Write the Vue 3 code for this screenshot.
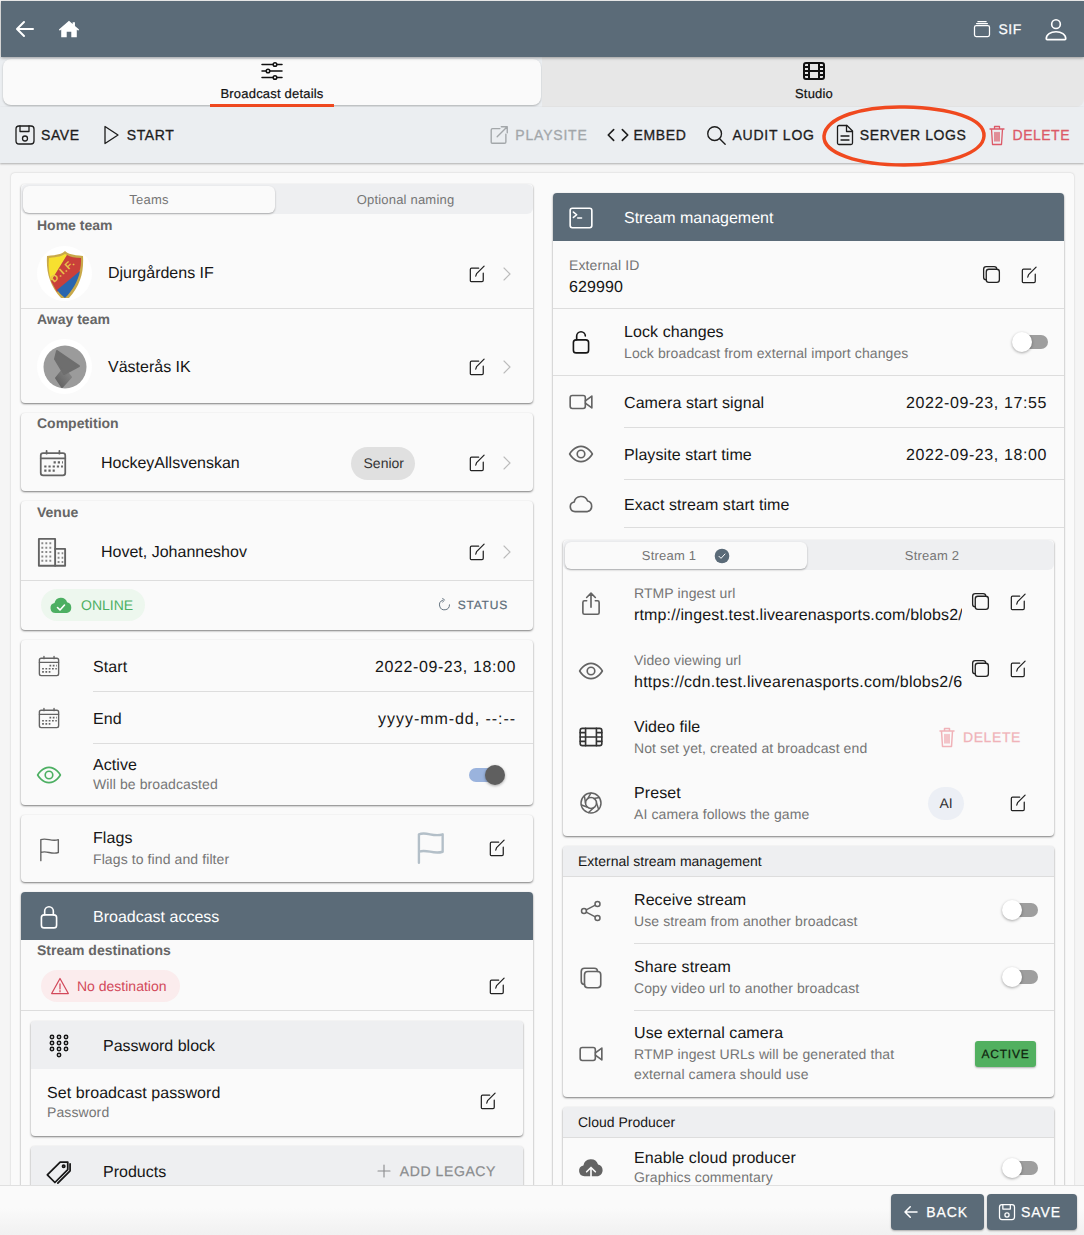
<template>
	<div class="page">
		<header class="topbar">
			<Icon name="back" :size="24" :weight="2" class="back" />
			<Icon name="home" :size="22" class="home" />
			<span class="spacer"></span>
			<Icon name="stack" :size="20" />
			<span class="org">SIF</span>
			<Icon name="user" :size="26" class="user" />
		</header>

		<nav class="tabs">
			<div class="tab on">
				<Icon name="sliders" :size="24" />
				<span class="tab-label">Broadcast details</span>
			</div>
			<div class="tab studio">
				<Icon name="film" :size="24" :weight="2" />
				<span class="tab-label">Studio</span>
			</div>
		</nav>

		<div class="toolbar">
			<button class="tool save"><Icon name="save" :size="24" :weight="1.3" />SAVE</button>
			<button class="tool start"><Icon name="play" :size="24" :weight="1.3" />START</button>
			<span class="spacer"></span>
			<button class="tool muted"><Icon name="external" :size="22" />PLAYSITE</button>
			<button class="tool embed"><Icon name="code" :size="26" />EMBED</button>
			<button class="tool audit"><Icon name="search" :size="22" />AUDIT LOG</button>
			<button class="tool logs"><Icon name="doc" :size="24" :weight="1.3" />SERVER LOGS</button>
			<button class="tool danger"><Icon name="trash" :size="24" :weight="1.3" />DELETE</button>
			<svg class="circle" width="166" height="64" viewBox="0 0 166 64" fill="none" stroke="#f0491f" stroke-width="3.5">
				<path d="M84 3C42 2 5 13 3 32c-1 17 34 29 80 29 44 0 79-12 80-29C164 14 128 4 84 3z" />
			</svg>
		</div>

		<main class="content">
			<div class="panel">
				<section class="col">
					<div class="card">
						<div class="seg">
							<div class="seg-item on">Teams</div>
							<div class="seg-item grow second">Optional naming</div>
						</div>
						<div class="label home-label">Home team</div>
						<div class="pick team home-row">
							<div class="avatar">
								<svg width="42" height="48" viewBox="0 0 42 48">
									<path d="M3 6C13 5 18 4 21 1c3 3 8 4 18 5 1 17-3 32-18 46C6 38 2 23 3 6z" fill="#c9a94a" />
									<path d="M5 8c9-1 13-2 16-4l2 1L7 31C5 24 4 16 5 8z" fill="#f7e02f" />
									<path d="M23 5c3 2 8 3 14 3 0 5 0 9-2 15L13 42 7 31z" fill="#c9403a" />
									<path d="M36 21c-2 10-7 19-15 27-4-3-6-6-8-8z" fill="#2b66ae" />
									<text class="shield-text" x="10" y="33" transform="rotate(-42 10 33)">D.I.F.</text>
								</svg>
							</div>
							<span class="pick-name">Djurgårdens IF</span>
							<Icon name="edit" :size="20" class="edit" />
							<Icon name="chevron" :size="18" class="chev" />
						</div>
						<div class="label away-label">Away team</div>
						<div class="pick team last">
							<div class="avatar">
								<svg width="44" height="44" viewBox="0 0 44 44" stroke-width="2" stroke-linejoin="round">
									<defs>
										<linearGradient id="awayFade" x1="0" y1="1" x2="1" y2="0">
											<stop offset="0" stop-color="#5c5c5c" />
											<stop offset="1" stop-color="#8c8c8c" />
										</linearGradient>
									</defs>
									<circle cx="22" cy="22" r="21.500" fill="#9b9b9b" />
									<path d="M21 23l7 9-9 10-6-9z" fill="url(#awayFade)" stroke="url(#awayFade)" />
									<path d="M14 6l22 15-15 8-9-15z" fill="#6e6e6e" stroke="#6e6e6e" />
								</svg>
							</div>
							<span class="pick-name">Västerås IK</span>
							<Icon name="edit" :size="20" class="edit" />
							<Icon name="chevron" :size="18" class="chev" />
						</div>
					</div>

					<div class="card">
						<div class="label comp-label">Competition</div>
						<div class="pick comp">
							<Icon name="calendar" :size="28" class="grey lead comp-ic" />
							<span class="pick-name">HockeyAllsvenskan</span>
							<span class="chip-senior">Senior</span>
							<Icon name="edit" :size="20" class="edit" />
							<Icon name="chevron" :size="18" class="chev" />
						</div>
					</div>

					<div class="card">
						<div class="label venue-label">Venue</div>
						<div class="pick venue">
							<Icon name="building" :size="30" class="grey lead" />
							<span class="pick-name">Hovet, Johanneshov</span>
							<Icon name="edit" :size="20" class="edit" />
							<Icon name="chevron" :size="18" class="chev" />
						</div>
						<div class="status-row">
							<span class="pill online"><Icon name="cloudCheck" :size="24" />ONLINE</span>
							<span class="spacer"></span>
							<span class="status"><Icon name="refresh" :size="15" />STATUS</span>
						</div>
					</div>

					<div class="card">
						<div class="row shift">
							<div class="lead-cell"><Icon name="calendar" :size="22" class="grey" /></div>
							<div class="body h49 line"><span class="title">Start</span><span class="spacer"></span><span class="date left-date">2022-09-23, 18:00</span></div>
						</div>
						<div class="row shift">
							<div class="lead-cell"><Icon name="calendar" :size="22" class="grey" /></div>
							<div class="body h49 line"><span class="title">End</span><span class="spacer"></span><span class="date left-date blank">yyyy-mm-dd, --:--</span></div>
						</div>
						<div class="row">
							<div class="lead-cell"><Icon name="eye" :size="26" class="green" /></div>
							<div class="body h61">
								<div class="text tight"><div class="title">Active</div><div class="sub">Will be broadcasted</div></div>
								<span class="spacer"></span>
								<span class="toggle on active-toggle"><i></i></span>
							</div>
						</div>
					</div>

					<div class="card">
						<div class="row">
							<div class="lead-cell"><Icon name="flag" :size="28" :weight="1.2" class="grey" /></div>
							<div class="body h67">
								<div class="text"><div class="title">Flags</div><div class="sub">Flags to find and filter</div></div>
								<span class="spacer"></span>
								<Icon name="flag" :size="38" class="flag-ghost" />
								<Icon name="edit" :size="20" class="edit flags-edit raise" />
							</div>
						</div>
					</div>

					<div class="card">
						<div class="slate-head"><div class="lead-cell"><Icon name="lock" :size="26" /></div>Broadcast access</div>
						<div class="label dest-label">Stream destinations</div>
						<div class="dest-row">
							<span class="pill warn"><Icon name="warning" :size="20" />No destination</span>
							<span class="spacer"></span>
							<Icon name="edit" :size="20" class="edit flags-edit" />
						</div>
						<div class="inner-list">
							<div class="card inner">
								<div class="grey-head"><div class="lead-cell"><Icon name="keypad" :size="24" /></div>Password block</div>
								<div class="pw-row">
									<div class="text tight"><div class="title">Set broadcast password</div><div class="sub">Password</div></div>
									<span class="spacer"></span>
									<Icon name="edit" :size="20" class="edit up" />
								</div>
							</div>
							<div class="card inner">
								<div class="grey-head products">
									<div class="lead-cell"><Icon name="tags" :size="28" /></div>Products
									<span class="spacer"></span>
									<span class="add"><Icon name="plus" :size="18" />ADD LEGACY</span>
								</div>
								<div class="pw-row"></div>
							</div>
						</div>
					</div>
				</section>

				<section class="col right">
					<div class="card">
						<div class="slate-head"><div class="lead-cell"><Icon name="terminal" :size="26" /></div>Stream management</div>
						<div class="ext-row">
							<div class="text ext-id"><div class="sub">External ID</div><div class="title">629990</div></div>
							<span class="spacer"></span>
							<Icon name="copy" :size="21" class="copy ext-copy" />
							<Icon name="edit" :size="20" class="edit" />
						</div>
						<div class="row sep">
							<div class="lead-cell"><Icon name="unlock" :size="26" /></div>
							<div class="body h66">
								<div class="text nudge"><div class="title">Lock changes</div><div class="sub">Lock broadcast from external import changes</div></div>
								<span class="spacer"></span>
								<span class="toggle"><i></i></span>
							</div>
						</div>
						<div v-for="t in times" :key="t.title" class="row shift">
							<div class="lead-cell"><Icon :name="t.icon" :size="26" class="grey" /></div>
							<div class="body line" :class="t.date ? 'h49' : 'h45'">
								<span class="title">{{ t.title }}</span><span class="spacer"></span><span class="date">{{ t.date }}</span>
							</div>
						</div>
						<div class="card inner stream first">
							<div class="seg">
								<div class="seg-item on stream-tab">Stream 1<Icon name="checkBadge" :size="16" class="badge" /></div>
								<div class="seg-item grow second">Stream 2</div>
							</div>
							<div v-for="u in urls" :key="u.label" class="row">
								<div class="lead-cell"><Icon :name="u.icon" :size="26" class="grey" /></div>
								<div class="body h67 edit-body">
									<div class="text url"><div class="sub">{{ u.label }}</div><div class="title nowrap" :class="u.cls">{{ u.value }}</div></div>
									<Icon name="copy" :size="21" class="copy up" />
									<Icon name="edit" :size="20" class="edit up" />
								</div>
							</div>
							<div class="row">
								<div class="lead-cell"><Icon name="film" :size="26" class="dark" /></div>
								<div class="body h66">
									<div class="text"><div class="title">Video file</div><div class="sub">Not set yet, created at broadcast end</div></div>
									<span class="spacer"></span>
									<span class="faded-del"><Icon name="trash" :size="24" />DELETE</span>
								</div>
							</div>
							<div class="row">
								<div class="lead-cell"><Icon name="aperture" :size="24" class="grey" /></div>
								<div class="body h66 edit-body">
									<div class="text"><div class="title">Preset</div><div class="sub">AI camera follows the game</div></div>
									<span class="spacer"></span>
									<span class="chip-ai">AI</span>
									<Icon name="edit" :size="20" class="edit" />
								</div>
							</div>
						</div>
						<div class="card inner stream">
							<div class="thin-head">External stream management</div>
							<div class="row">
								<div class="lead-cell"><Icon name="share" :size="24" class="grey" /></div>
								<div class="body h66 line">
									<div class="text"><div class="title">Receive stream</div><div class="sub">Use stream from another broadcast</div></div>
									<span class="spacer"></span>
									<span class="toggle"><i></i></span>
								</div>
							</div>
							<div class="row">
								<div class="lead-cell"><Icon name="copy" :size="26" class="grey" /></div>
								<div class="body h66 line">
									<div class="text"><div class="title">Share stream</div><div class="sub">Copy video url to another broadcast</div></div>
									<span class="spacer"></span>
									<span class="toggle"><i></i></span>
								</div>
							</div>
							<div class="row">
								<div class="lead-cell"><Icon name="video" :size="26" class="grey" /></div>
								<div class="body h86">
									<div class="text two"><div class="title">Use external camera</div><div class="sub">RTMP ingest URLs will be generated that<br />external camera should use</div></div>
									<span class="spacer"></span>
									<span class="active-tag">ACTIVE</span>
								</div>
							</div>
						</div>
						<div class="card inner stream">
							<div class="thin-head">Cloud Producer</div>
							<div class="row">
								<div class="lead-cell"><Icon name="cloudUp" :size="26" class="grey" /></div>
								<div class="body h60">
									<div class="text tight"><div class="title">Enable cloud producer</div><div class="sub">Graphics commentary</div></div>
									<span class="spacer"></span>
									<span class="toggle"><i></i></span>
								</div>
							</div>
						</div>
					</div>
				</section>
			</div>
		</main>

		<footer class="footer">
			<button class="foot-btn"><Icon name="back" :size="18" :weight="2" />BACK</button>
			<button class="foot-btn alt"><Icon name="save" :size="20" />SAVE</button>
		</footer>
	</div>
</template>

<script setup>
	import { h } from 'vue'

	const icons = {
		back: '<path d="M20 12H5M11 5l-7 7 7 7"/>',
		home: '<path fill="currentColor" stroke="none" d="M12 3l4 3.500V4.500h2.500v4.200L23 12.600l-1 1.200-1.500-1.300V21h-6v-6h-5v6h-6v-8.500L2 13.800l-1-1.200z"/>',
		stack: '<rect x="3" y="8" width="18" height="13" rx="2"/><path d="M5.500 5.500h13M7 3h10"/>',
		user: '<circle cx="12" cy="7.500" r="4"/><path d="M3 21c0-4 4-6.500 9-6.500s9 2.500 9 6.500c0 .5-.2.800-.8.800H3.800c-.6 0-.8-.3-.8-.8z"/>',
		sliders: '<path d="M2 5.500h20M2 12h20M2 18.500h20"/><circle cx="15" cy="5.500" r="1.800" fill="#fafafa"/><circle cx="8" cy="12" r="1.800" fill="#fafafa"/><circle cx="15" cy="18.500" r="1.800" fill="#fafafa"/>',
		film: '<rect x="2" y="4" width="20" height="16" rx="2"/><path d="M7 4v16M17 4v16M7 12h10M2 8h5M2 12h5M2 16h5M17 8h5M17 12h5M17 16h5"/>',
		save: '<rect x="3" y="3" width="18" height="18" rx="3"/><path d="M7 3v5.500h9V3"/><circle cx="12" cy="15.500" r="2.500"/>',
		play: '<path d="M6 3.500v17l13-8.500z"/>',
		external: '<path d="M13 5H5a1.500 1.500 0 0 0-1.500 1.500V20A1 1 0 0 0 4.500 21H18a1.500 1.500 0 0 0 1.500-1.500V11"/><path d="M10 14L21 3M14.500 3H21v6.500"/>',
		code: '<path d="M8 7l-5 5 5 5M16 7l5 5-5 5"/>',
		search: '<circle cx="10.500" cy="10.500" r="7.500"/><path d="M16 16l6 6"/>',
		doc: '<path d="M6 2.500h8l5.500 5.500v12a1.500 1.500 0 0 1-1.500 1.500H6A1.500 1.500 0 0 1 4.500 20V4A1.500 1.500 0 0 1 6 2.500z"/><path d="M13.500 2.500V8.500h6M8 13h8M8 17h8"/>',
		trash: '<path d="M5 6h14M9.500 6V3.500h5V6M6.500 6l1 15.500h9l1-15.500M10 9.500V18M12 9.500V18M14 9.500V18"/>',
		edit: '<path d="M14 5H5.500A1.500 1.500 0 0 0 4 6.500V20a1 1 0 0 0 1 1h13a1.500 1.500 0 0 0 1.500-1.500V11"/><path d="M10.500 14.500l1-3L20.500 2.500"/>',
		chevron: '<path d="M8 4l8 8-8 8"/>',
		calendar: '<rect x="1.500" y="3.500" width="21" height="19" rx="2"/><path d="M1.500 8h21M6.500 1.500V4M17.500 1.500V4"/><g stroke-width="1.900" stroke-dasharray="1.900 1.700" stroke-linecap="butt"><path d="M12.500 11.500h8M4.500 15h16M4.500 18.500h9"/></g>',
		building: '<rect x="1.500" y="1.500" width="13" height="21.500"/><path d="M14.500 9.500h8V23h-8"/><g stroke-width="1.600" stroke-dasharray="1.500 1.700" stroke-linecap="butt" opacity=".75"><path d="M3.500 5h9M3.500 8.500h9M3.500 12h9M3.500 15.500h9M3.500 19h9M16.500 13h4.500M16.500 16.500h4.500M16.500 20h4.500"/></g>',
		cloudCheck: '<path fill="currentColor" stroke="none" d="M6.500 20a5 5 0 0 1-1-9.900 6.500 6.500 0 0 1 12.600-.8A5.500 5.500 0 0 1 18 20z"/><path stroke="#fff" stroke-width="1.600" d="M8.500 14.500l2.500 2.500 4.500-5"/>',
		refresh: '<path d="M20 12.500a8 8 0 1 1-11-7.400"/><path d="M9 2l3 3-3 3"/>',
		eye: '<path d="M1.500 12S5.500 5 12 5s10.500 7 10.500 7-4 7-10.500 7S1.500 12 1.500 12z"/><circle cx="12" cy="12" r="3.500"/>',
		flag: '<path d="M5 22V4c5-2 9 2 15 0v11c-6 2-10-2-15 0"/>',
		lock: '<rect x="5" y="10" width="14" height="12" rx="2.500"/><path d="M8 10V6.500a4 4 0 0 1 8 0V10"/>',
		unlock: '<rect x="5" y="10" width="14" height="12" rx="2.500"/><path d="M8 10V6.500a4 4 0 0 1 8 0"/>',
		warning: '<path d="M12 3l10 18H2z"/><path d="M12 9.500v6M12 17.500v1.500"/>',
		keypad: '<circle cx="5" cy="3" r="1.700"/><circle cx="12" cy="3" r="1.700"/><circle cx="19" cy="3" r="1.700"/><circle cx="5" cy="9" r="1.700"/><circle cx="12" cy="9" r="1.700"/><circle cx="19" cy="9" r="1.700"/><circle cx="5" cy="15" r="1.700"/><circle cx="12" cy="15" r="1.700"/><circle cx="19" cy="15" r="1.700"/><circle cx="12" cy="21" r="1.700"/>',
		tags: '<path d="M2 14.500L13 3.500h6.500V10L8.500 21z"/><circle cx="16" cy="7" r="1"/><path d="M21.500 5v6L11 21.500"/>',
		plus: '<path d="M12 4v16M4 12h16"/>',
		terminal: '<rect x="2" y="3" width="20" height="18" rx="2"/><path d="M5 6.500l3 2.500-3 2.500M9 12h3.500"/>',
		copy: '<rect x="6" y="6" width="15" height="15" rx="3"/><path d="M6 18a3 3 0 0 1-3-3V6a3 3 0 0 1 3-3h9a3 3 0 0 1 3 3"/>',
		video: '<rect x="2" y="6" width="14" height="12" rx="2"/><path d="M16 11l6-4.500v11L16 13"/>',
		cloud: '<path d="M6.500 19a4.500 4.500 0 0 1-.8-8.900 6.500 6.500 0 0 1 12.400-.8A5 5 0 0 1 18 19z"/>',
		checkBadge: '<circle cx="12" cy="12" r="11" fill="#5b6b78" stroke="none"/><path stroke="#fff" d="M7.500 12.500l3 3 6-6.500"/>',
		share: '<circle cx="18.500" cy="5" r="2.500"/><circle cx="5" cy="12" r="2.500"/><circle cx="18.500" cy="19" r="2.500"/><path d="M7.200 10.800L16.300 6.200M7.200 13.200l9.100 4.600"/>',
		upload: '<path d="M8 9H6a1.500 1.500 0 0 0-1.500 1.500V20A1.500 1.500 0 0 0 6 21.500h12a1.500 1.500 0 0 0 1.500-1.500V10.500A1.500 1.500 0 0 0 18 9h-2M12 15V2M8 6l4-4 4 4"/>',
		aperture: '<circle cx="12" cy="12" r="10"/><circle cx="12" cy="12" r="5.500"/><path d="M9 7.200L12 2M15 7.500l5.500-1M17.500 12l2 6M14.500 17l-5 4.500M8 16L2.500 14M6.500 12l-1-6.500"/>',
		cloudUp: '<path fill="currentColor" stroke="none" d="M6 19.500a5 5 0 0 1-1-9.900 7 7 0 0 1 13.500-.8A5.500 5.500 0 0 1 18.500 19.500z"/><path stroke="#fafafa" d="M12 23V12M8 15.500l4-4 4 4"/>'
	}

	const Icon = (props) => h('svg', {
		width: props.size,
		height: props.size,
		viewBox: '0 0 24 24',
		fill: 'none',
		stroke: 'currentColor',
		'stroke-width': props.weight || 1.5,
		'stroke-linecap': 'round',
		'stroke-linejoin': 'round',
		innerHTML: icons[props.name]
	})
	Icon.props = ['name', 'size', 'weight']

	const times = [
		{ title: 'Camera start signal', date: '2022-09-23, 17:55', icon: 'video' },
		{ title: 'Playsite start time', date: '2022-09-23, 18:00', icon: 'eye' },
		{ title: 'Exact stream start time', date: '', icon: 'cloud' }
	]

	const urls = [
		{ label: 'RTMP ingest url', value: 'rtmp://ingest.test.livearenasports.com/blobs2/', icon: 'upload', cls: 'rtmp' },
		{ label: 'Video viewing url', value: 'https://cdn.test.livearenasports.com/blobs2/6', icon: 'eye', cls: 'cdn' }
	]
</script>

<style>
	html, body {
		margin: 0;
		background: #f5f5f5;
	}
</style>

<style scoped>
	.page {
		height: 1235px;
		display: flex;
		flex-direction: column;
		overflow: hidden;
		padding: 1px 0 0 1px;
		box-sizing: border-box;
		background: #f5f5f5;
		color: #161616;
		font-family: "Liberation Sans", Arial, sans-serif;
		font-size: 16px;
		text-rendering: geometricPrecision;
		position: relative;
	}
	.spacer {
		flex: 1;
	}
	button {
		border: 0;
		background: none;
		font-family: inherit;
		padding: 0;
	}
	svg {
		flex: none;
		display: block;
	}

	.topbar {
		height: 56px;
		flex: none;
		display: flex;
		align-items: center;
		padding: 0 15px 0 12px;
		background: #5b6b78;
		color: #fff;
		box-shadow: 0 1px 3px rgba(0, 0, 0, .35);
		position: relative;
		z-index: 2;
	}
	.home {
		margin-left: 21px;
	}
	.org {
		margin: 0 21px 0 6px;
		font-size: 14px;
		letter-spacing: .6px;
		-webkit-text-stroke: .25px currentColor;
	}

	.tabs {
		height: 50px;
		flex: none;
		display: grid;
		grid-template-columns: 542px 1fr;
		background: #ebeef1;
		margin-left: -1px;
	}
	.tab {
		display: flex;
		flex-direction: column;
		align-items: center;
		padding-top: 2px;
		background: #e7e7e7;
		border-bottom-right-radius: 8px;
		color: #111;
		font-size: 13px;
		letter-spacing: .2px;
		-webkit-text-stroke: .2px currentColor;
	}
	.tab.studio {
		padding-left: 2px;
	}
	.tab-label {
		margin-top: 2px;
		line-height: 17px;
		padding: 0 10px 2px;
	}
	.tab.on {
		margin: 2px 1px 2px 3px;
		padding-top: 0;
		background: #fafafa;
		border-radius: 8px;
		box-shadow: 0 1px 2px rgba(0, 0, 0, .25);
	}
	.tab.on .tab-label {
		border-bottom: 3px solid #f0491f;
		margin-bottom: -8px;
	}

	.toolbar {
		height: 56px;
		flex: none;
		display: flex;
		align-items: center;
		padding: 0 14px 0 13px;
		margin-left: -1px;
		background: #ebeef1;
		box-shadow: 0 1px 2px rgba(0, 0, 0, .3);
		position: relative;
		z-index: 1;
	}
	.tool {
		display: flex;
		align-items: center;
		gap: 4px;
		font-size: 14px;
		letter-spacing: .6px;
		-webkit-text-stroke: .3px currentColor;
		color: #1d1d1d;
	}
	.start {
		margin-left: 19px;
	}
	.muted {
		color: #a3a7aa;
		gap: 5px;
		letter-spacing: .8px;
	}
	.embed {
		gap: 3px;
		margin-left: 17px;
	}
	.audit {
		margin-left: 19px;
		gap: 5px;
		letter-spacing: .8px;
	}
	.logs {
		margin-left: 18px;
		gap: 3px;
	}
	.danger {
		margin-left: 18px;
		color: #dc5a68;
		letter-spacing: .5px;
	}
	.circle {
		position: absolute;
		left: 821px;
		top: -3px;
	}

	.content {
		flex: 1;
		min-height: 0;
		overflow: hidden;
		padding: 10px 10px 0 10px;
	}
	.panel {
		background: #fafafa;
		box-shadow: 0 0 2px rgba(0, 0, 0, .2);
		border-radius: 4px 4px 0 0;
		display: grid;
		grid-template-columns: 512px 511px;
		gap: 20px;
		padding: 11px 10px 0;
	}
	.col {
		display: flex;
		flex-direction: column;
		gap: 10px;
		min-width: 0;
	}
	.col.right {
		padding-top: 9px;
	}

	.card {
		background: #fafafa;
		border-radius: 4px;
		box-shadow: 0 1px 2px rgba(0, 0, 0, .5);
		flex: none;
	}
	.card.inner {
		min-width: 0;
	}
	.stream {
		margin: 10px 10px 0;
	}
	.stream.first {
		margin-top: 12px;
	}

	.seg {
		height: 30px;
		display: flex;
		background: #eeeff1;
		border-radius: 6px;
		padding: 2px 2px 1px;
		box-sizing: border-box;
		color: #757575;
		font-size: 13px;
		letter-spacing: .2px;
	}
	.seg-item {
		display: flex;
		align-items: center;
		justify-content: center;
		width: 252px;
		flex: none;
		border-radius: 6px;
	}
	.seg-item.on {
		background: #fafafa;
		box-shadow: 0 1px 2px rgba(0, 0, 0, .3);
	}
	.seg-item.grow {
		flex: 1;
	}
	.seg-item.second {
		padding-left: 5px;
	}
	.stream-tab {
		width: 242px;
		gap: 18px;
	}

	.label {
		font-size: 14px;
		font-weight: bold;
		color: #666;
		padding-left: 16px;
		line-height: 20px;
	}
	.home-label {
		line-height: 22px;
	}
	.venue-label {
		line-height: 22px;
	}

	.pick {
		display: flex;
		align-items: center;
		box-sizing: border-box;
		padding-left: 16px;
		padding-right: 17px;
	}
	.team {
		height: 73px;
		border-bottom: 1px solid #ddd;
	}
	.home-row {
		padding-top: 3px;
	}
	.team.last {
		height: 74px;
		padding-top: 1px;
		border-bottom: 0;
	}
	.comp {
		height: 58px;
		padding-top: 2px;
	}
	.venue {
		height: 58px;
		border-bottom: 1px solid #ddd;
	}
	.avatar {
		width: 55px;
		height: 55px;
		border-radius: 50%;
		background: #fff;
		display: flex;
		align-items: center;
		justify-content: center;
		margin-right: 16px;
		flex: none;
	}
	.shield-text {
		font-size: 10px;
		font-weight: bold;
		fill: #e9c44a;
		letter-spacing: 1px;
	}
	.pick-name {
		flex: 1;
		margin-top: 2px;
	}
	.home-row .pick-name {
		margin-top: 0;
	}
	.lead {
		margin-right: 34px;
	}
	.comp-ic {
		margin-left: 2px;
	}
	.edit {
		color: #222;
	}
	.chev {
		color: #bbb;
		margin-left: 11px;
	}
	.grey {
		color: #636363;
	}
	.dark {
		color: #333;
	}
	.green {
		color: #4caf62;
	}
	.chip-senior {
		background: #e0e0e0;
		border-radius: 17px;
		height: 33px;
		line-height: 33px;
		padding: 0 11px 0 13px;
		font-size: 14px;
		color: #333;
		margin-right: 52px;
	}

	.status-row {
		height: 49px;
		box-sizing: border-box;
		display: flex;
		align-items: center;
		padding: 0 25px 2px 20px;
	}
	.pill {
		height: 32px;
		border-radius: 16px;
		display: inline-flex;
		align-items: center;
		gap: 8px;
		padding: 0 12px 0 8px;
		font-size: 14px;
	}
	.online {
		background: #edf7ee;
		color: #4caf62;
	}
	.status {
		display: flex;
		align-items: center;
		gap: 6px;
		font-size: 12px;
		letter-spacing: .8px;
		-webkit-text-stroke: .2px currentColor;
		color: #5b6b78;
	}

	.row {
		display: flex;
	}
	.row.shift {
		padding-top: 2px;
	}
	.shift .lead-cell {
		margin-top: -2px;
	}
	.shift .title, .shift .date {
		margin-top: 2px;
	}
	.row.sep {
		border-top: 1px solid #ddd;
		border-bottom: 1px solid #ddd;
	}
	.lead-cell {
		width: 72px;
		flex: none;
		display: flex;
		align-items: center;
		justify-content: center;
		padding-right: 16px;
		box-sizing: border-box;
	}
	.right .lead-cell {
		width: 71px;
		padding-right: 15px;
	}
	.body {
		flex: 1;
		min-width: 0;
		display: flex;
		align-items: center;
		padding-right: 17px;
	}
	.line {
		border-bottom: 1px solid #ddd;
	}
	.h45 { height: 45px; }
	.h49 { height: 49px; }
	.h60 { height: 60px; }
	.h61 { height: 61px; }
	.h66 { height: 66px; }
	.h67 { height: 67px; }
	.h86 { height: 86px; }
	.title {
		line-height: 21px;
		letter-spacing: .08px;
	}
	.sub {
		font-size: 14px;
		line-height: 21px;
		letter-spacing: .1px;
		color: #757575;
	}
	.tight {
		padding-bottom: 3px;
	}
	.tight .sub {
		line-height: 16px;
	}
	.stream .text {
		margin-top: 1px;
	}
	.stream .tight {
		margin-top: 0;
	}
	.stream .two {
		margin-top: -1px;
	}
	.two .sub {
		line-height: 20px;
	}
	.nudge {
		margin-top: 2px;
	}
	.ext-id {
		margin-top: 4px;
	}
	.ext-id .title {
		margin-top: 1px;
	}
	.date {
		letter-spacing: .6px;
	}
	.blank {
		letter-spacing: .95px;
	}
	.stream .text.url {
		width: 328px;
		flex: none;
		overflow: hidden;
		margin-top: 2px;
		margin-right: 8px;
	}
	.url .title {
		margin-top: 1px;
	}
	.url .rtmp {
		letter-spacing: .15px;
	}
	.url .cdn {
		letter-spacing: .26px;
	}
	.nowrap {
		white-space: nowrap;
	}
	.edit-body {
		padding-right: 26px;
	}
	.copy {
		color: #222;
		margin-right: 17px;
	}
	.up {
		margin-top: -4px;
	}
	.raise {
		margin-top: -2px;
	}

	.toggle {
		display: block;
		width: 36px;
		height: 14px;
		position: relative;
		margin-right: -1px;
	}
	.toggle::before {
		content: "";
		position: absolute;
		left: 10px;
		right: 0;
		top: 0;
		bottom: 0;
		background: #9e9e9e;
		border-radius: 7px;
	}
	.toggle i {
		position: absolute;
		left: 0;
		top: -3px;
		width: 20px;
		height: 20px;
		border-radius: 50%;
		background: #fff;
		box-shadow: 0 1px 3px rgba(0, 0, 0, .35);
	}
	.toggle.on::before {
		left: 0;
		right: 10px;
		background: #9ab3dd;
	}
	.toggle.on i {
		left: 16px;
		background: #5f5f5f;
	}
	.active-toggle {
		margin-right: 11px;
	}

	.flag-ghost {
		color: #b3bfc8;
		margin-right: 38px;
		margin-top: -4px;
	}
	.flags-edit {
		margin-right: 9px;
	}

	.slate-head {
		height: 48px;
		display: flex;
		align-items: stretch;
		line-height: 52px;
		background: #5b6b78;
		color: #fff;
		border-radius: 4px 4px 0 0;
	}
	.slate-head .lead-cell {
		padding-top: 2px;
	}
	.dest-row {
		height: 48px;
		display: flex;
		align-items: center;
		padding: 2px 17px 0 20px;
		border-bottom: 1px solid #ddd;
	}
	.warn {
		background: #fbeced;
		color: #d2485a;
		gap: 7px;
		padding-left: 9px;
		padding-right: 13px;
	}
	.inner-list {
		display: flex;
		flex-direction: column;
		gap: 10px;
		padding: 10px;
	}
	.grey-head {
		height: 48px;
		box-sizing: border-box;
		display: flex;
		align-items: stretch;
		padding: 2px 27px 0 0;
		line-height: 48px;
		background: #eeeff1;
		border-radius: 4px 4px 0 0;
	}
	.grey-head.products {
		padding-top: 4px;
		line-height: 46px;
	}
	.add {
		display: flex;
		align-items: center;
		gap: 7px;
		margin-top: -2px;
		font-size: 14px;
		letter-spacing: .6px;
		-webkit-text-stroke: .25px currentColor;
		color: #8a8c8e;
	}
	.pw-row {
		height: 67px;
		display: flex;
		align-items: center;
		padding: 0 25px 0 16px;
	}

	.ext-row {
		height: 67px;
		display: flex;
		align-items: center;
		padding: 0 25px 0 16px;
	}
	.faded-del {
		display: flex;
		align-items: center;
		gap: 4px;
		font-size: 14px;
		letter-spacing: .6px;
		-webkit-text-stroke: .25px currentColor;
		color: #f0b2b8;
		margin-right: 16px;
	}
	.chip-ai {
		width: 36px;
		height: 33px;
		line-height: 33px;
		text-align: center;
		border-radius: 17px;
		background: #eceff5;
		font-size: 14px;
		color: #333;
		margin-right: 44px;
	}
	.thin-head {
		height: 30px;
		line-height: 30px;
		padding-left: 15px;
		font-size: 14px;
		background: #eeeff1;
		border-bottom: 1px solid #ddd;
		border-radius: 4px 4px 0 0;
	}
	.active-tag {
		width: 61px;
		height: 26px;
		line-height: 26px;
		text-align: center;
		background: #52b060;
		border-radius: 3px;
		box-shadow: 0 1px 2px rgba(0, 0, 0, .3);
		font-size: 12px;
		letter-spacing: .8px;
		-webkit-text-stroke: .25px currentColor;
		color: #10240f;
		margin-right: 1px;
	}

	.footer {
		height: 50px;
		flex: none;
		display: flex;
		justify-content: flex-end;
		align-items: flex-start;
		gap: 3px;
		padding: 8px 7px 0 0;
		box-sizing: border-box;
		margin-left: -1px;
		border-top: 1px solid #e0e0e0;
		background: linear-gradient(#fafafa 45%, #f1f1f1);
		position: relative;
		z-index: 2;
	}
	.foot-btn {
		height: 36px;
		display: flex;
		align-items: center;
		gap: 6px;
		padding: 0 16px 0 11px;
		background: #5b6b78;
		color: #fff;
		border-radius: 4px;
		box-shadow: 0 1px 2px rgba(0, 0, 0, .3);
		font-size: 14px;
		letter-spacing: .9px;
		-webkit-text-stroke: .25px currentColor;
	}
	.foot-btn.alt {
		gap: 4px;
		padding-left: 10px;
	}
</style>
